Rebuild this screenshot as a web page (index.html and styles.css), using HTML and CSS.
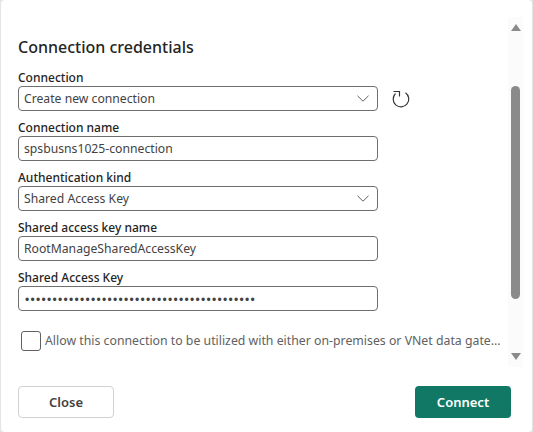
FILE: index.html
```html
<!DOCTYPE html>
<html lang="en">
<head>
<meta charset="utf-8">
<title>Connection credentials</title>
<link rel="stylesheet" href="styles.css">
</head>
<body>
<div class="dialog">
  <div class="scroll-area">
    <div class="content">
      <h1 class="title">Connection credentials</h1>
      <div class="field">
        <label class="label">Connection</label>
        <div class="field-row">
          <div class="input">
            <span class="value">Create new connection</span>
            <svg class="chevron" viewBox="0 0 12 7"><path d="M.5.8 6 6.2 11.500.8"/></svg>
          </div>
          <svg class="refresh" viewBox="0 0 18 18"><path d="M3.500 3.500A7.800 7.800 0 1 0 13.500 2.700"/><path d="M1.500 1.500H7.500V6.500"/></svg>
        </div>
      </div>
      <div class="field">
        <label class="label">Connection name</label>
        <div class="input"><span class="value">spsbusns1025-connection</span></div>
      </div>
      <div class="field">
        <label class="label">Authentication kind</label>
        <div class="input">
          <span class="value">Shared Access Key</span>
          <svg class="chevron" viewBox="0 0 12 7"><path d="M.5.8 6 6.2 11.500.8"/></svg>
        </div>
      </div>
      <div class="field">
        <label class="label">Shared access key name</label>
        <div class="input"><span class="value">RootManageSharedAccessKey</span></div>
      </div>
      <div class="field">
        <label class="label">Shared Access Key</label>
        <div class="input"><span class="value dots">••••••••••••••••••••••••••••••••••••••••••</span></div>
      </div>
      <div class="check-row">
        <span class="checkbox"></span>
        <span class="check-label">Allow this connection to be utilized with either on-premises or VNet data gate...</span>
      </div>
    </div>
    <div class="scrollbar">
      <span class="arrow up"></span>
      <div class="rail"><span class="thumb"></span></div>
      <span class="arrow down"></span>
    </div>
  </div>
  <div class="footer">
    <button class="btn secondary">Close</button>
    <button class="btn primary">Connect</button>
  </div>
</div>
</body>
</html>
```
FILE: styles.css
```css
* { box-sizing: border-box; }
html, body { margin: 0; height: 100%; background: #e4e4e4; }
body { font-family: "Noto Sans", "Open Sans", sans-serif; color: #242424; overflow: hidden; }
.dialog {
  width: 531px; height: 432px; margin-left: 1px;
  background: #fff; border-radius: 4px;
  padding: 17px 9px 0 17px;
  display: flex; flex-direction: column;
}
.scroll-area { display: flex; height: 350px; }
.content { flex: 1; min-width: 0; padding-top: 20px; }
.title { margin: 0 0 12px; font-size: 16px; line-height: 20px; font-weight: 500; color: #242424; }
.field { height: 50px; }
.label { display: block; height: 17px; font-size: 12px; line-height: 17px; font-weight: 500; color: #242424; }
.field-row { display: flex; align-items: center; gap: 14px; }
.input {
  width: 360px; height: 25px; flex: none;
  border: 1px solid #6f6f6f; border-radius: 4px;
  padding: 0 8px 0 5px;
  display: flex; align-items: center; justify-content: space-between;
}
.value { font-size: 12.2px; line-height: 20px; color: #424242; white-space: nowrap; }
.dots { font-size: 12px; letter-spacing: 1.3px; margin: 3px 0 0 1px; font-family: "Liberation Sans", sans-serif; }
.chevron { width: 12px; height: 7px; fill: none; stroke: #616161; stroke-width: 1; }
.refresh { width: 18px; height: 18px; fill: none; stroke: #333333; stroke-width: 1.15; }
.check-row { display: flex; align-items: center; gap: 4px; margin: 12px 0 0 3px; }
.checkbox { width: 20px; height: 20px; flex: none; border: 1px solid #616161; border-radius: 3px; }
.check-label { font-size: 12.3px; line-height: 20px; color: #616161; white-space: nowrap; }
.scrollbar { width: 15px; flex: none; background: #fbfbfb; display: flex; flex-direction: column; align-items: center; }
.rail { flex: 1; width: 9px; padding-top: 48px; }
.thumb { display: block; width: 9px; height: 213px; background: #8a8a8a; border-radius: 5px; }
.arrow { width: 0; height: 0; border-left: 5px solid transparent; border-right: 5px solid transparent; margin: 7px 0; }
.arrow.up { border-bottom: 7px solid #8a8a8a; }
.arrow.down { border-top: 7px solid #8a8a8a; }
.footer { display: flex; justify-content: space-between; padding: 19px 12px 0 0; }
.btn { width: 96px; height: 32px; border-radius: 4px; font: 600 13px/20px "Noto Sans", "Open Sans", sans-serif; }
.secondary { background: #fff; border: 1px solid #d1d1d1; color: #424242; }
.primary { background: #117865; border: 0; color: #fff; }
```
